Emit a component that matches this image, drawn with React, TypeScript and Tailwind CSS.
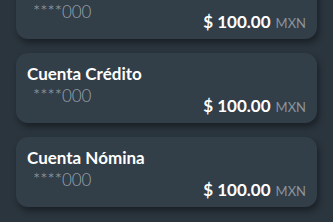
const accounts = [
  { name: "Cuenta Débito", number: "****000", amount: "100.00" },
  { name: "Cuenta Crédito", number: "****000", amount: "100.00" },
  { name: "Cuenta Nómina", number: "****000", amount: "100.00" },
];

export default function App() {
  return (
    <div className="h-[222px] w-[333px] overflow-hidden bg-[#2b353e] font-['Lato',sans-serif]">
      <div className="-mt-[31px] flex flex-col gap-[14px] px-4">
        {accounts.map((a, i) => (
          <div
            key={i}
            className="flex h-[70px] flex-col rounded-xl bg-[#323e48] pl-[11px] pr-[11px] pt-[11px] shadow-[2px_4px_6px_rgba(0,0,0,0.4)]"
          >
            <div className="text-[17px] font-bold leading-[20px] text-white">{a.name}</div>
            <div className="flex items-start justify-between">
              <div className="mt-[2px] pl-[6px] text-[17px] font-light leading-[20px] text-[#9aa3ab]">
                {a.number}
              </div>
              <div className="mt-[12px] flex items-baseline gap-[5px]">
                <span className="text-[17px] font-bold leading-[20px] text-white">$ {a.amount}</span>
                <span className="text-[13px] leading-[20px] text-[#8c959d]">MXN</span>
              </div>
            </div>
          </div>
        ))}
      </div>
    </div>
  );
}
